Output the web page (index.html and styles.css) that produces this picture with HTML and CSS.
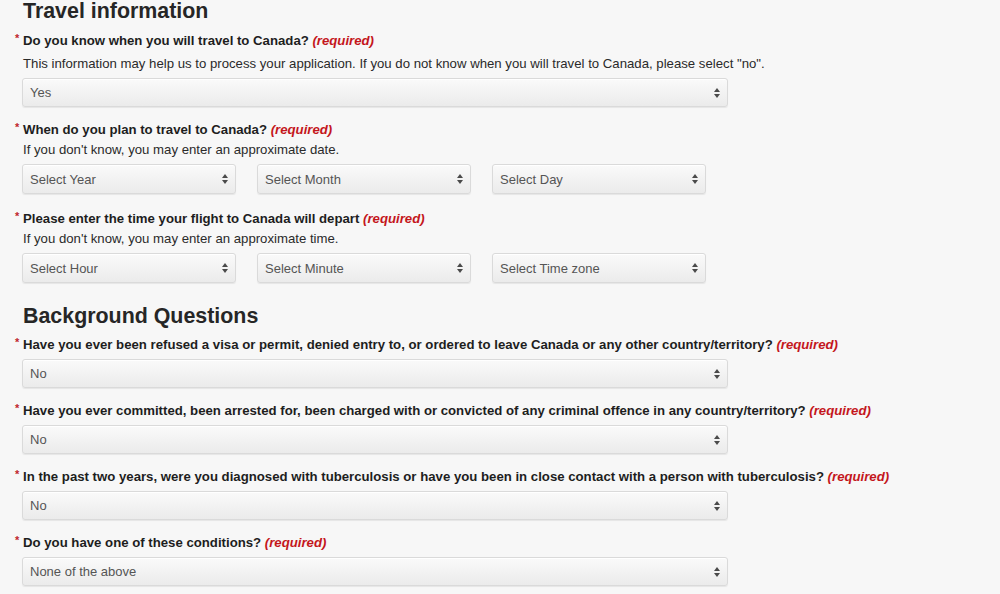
FILE: index.html
```html
<!DOCTYPE html>
<html>
<head>
<meta charset="utf-8">
<link rel="stylesheet" href="styles.css">
</head>
<body>
<div class="page">
  <h2 class="section-title first">Travel information</h2>

  <div class="field">
    <div class="label"><span class="star">*</span>Do you know when you will travel to Canada? <em class="req">(required)</em></div>
    <div class="help help-loose">This information may help us to process your application. If you do not know when you will travel to Canada, please select "no".</div>
    <div class="select wide"><span>Yes</span><i class="arrows"></i></div>
  </div>

  <div class="field tall">
    <div class="label"><span class="star">*</span>When do you plan to travel to Canada? <em class="req">(required)</em></div>
    <div class="help">If you don't know, you may enter an approximate date.</div>
    <div class="row">
      <div class="select small"><span>Select Year</span><i class="arrows"></i></div>
      <div class="select small"><span>Select Month</span><i class="arrows"></i></div>
      <div class="select small"><span>Select Day</span><i class="arrows"></i></div>
    </div>
  </div>

  <div class="field tall">
    <div class="label"><span class="star">*</span>Please enter the time your flight to Canada will depart <em class="req">(required)</em></div>
    <div class="help">If you don't know, you may enter an approximate time.</div>
    <div class="row">
      <div class="select small"><span>Select Hour</span><i class="arrows"></i></div>
      <div class="select small"><span>Select Minute</span><i class="arrows"></i></div>
      <div class="select small"><span>Select Time zone</span><i class="arrows"></i></div>
    </div>
  </div>

  <h2 class="section-title">Background Questions</h2>

  <div class="field">
    <div class="label"><span class="star">*</span>Have you ever been refused a visa or permit, denied entry to, or ordered to leave Canada or any other country/territory? <em class="req">(required)</em></div>
    <div class="select wide"><span>No</span><i class="arrows"></i></div>
  </div>

  <div class="field">
    <div class="label"><span class="star">*</span>Have you ever committed, been arrested for, been charged with or convicted of any criminal offence in any country/territory? <em class="req">(required)</em></div>
    <div class="select wide"><span>No</span><i class="arrows"></i></div>
  </div>

  <div class="field">
    <div class="label"><span class="star">*</span>In the past two years, were you diagnosed with tuberculosis or have you been in close contact with a person with tuberculosis? <em class="req">(required)</em></div>
    <div class="select wide"><span>No</span><i class="arrows"></i></div>
  </div>

  <div class="field">
    <div class="label"><span class="star">*</span>Do you have one of these conditions? <em class="req">(required)</em></div>
    <div class="select wide"><span>None of the above</span><i class="arrows"></i></div>
  </div>
</div>
</body>
</html>
```

FILE: styles.css
```css
html, body {
  margin: 0;
  padding: 0;
  background: #f7f7f7;
}
body {
  font-family: "Liberation Sans", Arial, Helvetica, sans-serif;
  color: #222;
  overflow: hidden;
}
.page {
  padding: 0 0 0 23px;
}
.section-title {
  margin: 20px 0 7px;
  font-size: 21.4px;
  font-weight: bold;
  color: #262626;
  line-height: 26px;
  height: 26px;
}
.section-title.first {
  margin-top: -2px;
  margin-bottom: 8px;
}
.field {
  margin-bottom: 14px;
}
.field.tall {
  margin-bottom: 16px;
}
.label {
  position: relative;
  font-size: 13.2px;
  font-weight: bold;
  line-height: 18px;
  color: #1e1e1e;
}
.star {
  position: absolute;
  left: -8px;
  top: -3px;
  color: #c0262b;
  font-size: 11px;
  font-weight: bold;
}
.req {
  color: #c4161c;
  font-style: italic;
}
.help {
  font-size: 13.2px;
  line-height: 19px;
  color: #2a2a2a;
  margin-top: 1px;
}
.help.help-loose {
  margin-top: 5px;
  line-height: 18px;
}
.label + .select {
  margin-top: 5px;
}
.help + .select, .help + .row {
  margin-top: 5px;
}
.row {
  display: flex;
  gap: 21px;
}
.select {
  position: relative;
  box-sizing: border-box;
  height: 29px;
  margin-left: -1px;
  border: 1px solid #dadada;
  border-radius: 3px;
  background: linear-gradient(#fafafa, #ebebeb);
  box-shadow: inset 0 1px 0 #fff, 0 1px 1px rgba(0,0,0,0.07);
  font-size: 13px;
  color: #555;
  display: flex;
  align-items: center;
  padding-left: 7px;
}
.row .select {
  height: 30px;
}
.row .select + .select {
  margin-left: 0;
}
.select.wide {
  width: 706px;
}
.select.small {
  width: 214px;
}
.arrows {
  position: absolute;
  right: 7px;
  top: 50%;
  width: 6px;
  height: 10px;
  margin-top: -5px;
}
.arrows::before, .arrows::after {
  content: "";
  position: absolute;
  left: 0;
  border-left: 3px solid transparent;
  border-right: 3px solid transparent;
}
.arrows::before {
  top: 0;
  border-bottom: 4px solid #4a4a4a;
}
.arrows::after {
  bottom: 0;
  border-top: 4px solid #4a4a4a;
}
```
